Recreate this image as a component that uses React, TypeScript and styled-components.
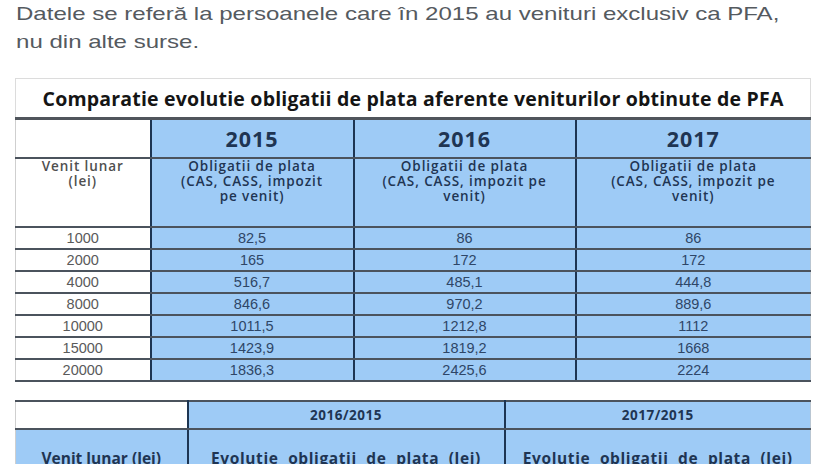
import React from "react";
import styled, { createGlobalStyle } from "styled-components";

const Global = createGlobalStyle`
  html, body { margin: 0; padding: 0; background: #ffffff; overflow: hidden; }
`;

const Page = styled.div`
  width: 825px;
  height: 464px;
  overflow: hidden;
  background: #ffffff;
`;

const Intro = styled.p`
  margin: 0 0 22px 16px;
  font-family: "Liberation Sans", Arial, sans-serif;
  font-size: 18.5px;
  line-height: 28px;
  color: #555a5f;
  white-space: nowrap;
  transform: scaleX(1.3);
  transform-origin: left top;
`;

const Table = styled.table`
  width: 795px;
  margin-left: 15px;
  border-collapse: collapse;
  table-layout: fixed;
  font-family: "Open Sans", "Noto Sans", sans-serif;
`;

const Title = styled.td`
  height: 38px;
  padding: 0;
  text-align: center;
  font-size: 19.5px;
  letter-spacing: 0.2px;
  font-weight: 700;
  color: #151515;
  background: #ffffff;
  border-top: 1px solid #dcdcdc;
  border-left: 1px solid #dcdcdc;
  border-right: 1px solid #dcdcdc;
  border-bottom: 3px solid #50555c;
`;

const Cell = styled.td<{ $blue?: boolean; $h: number; $size?: number; $bold?: boolean; $top?: boolean; $last?: boolean }>`
  height: ${(p) => p.$h}px;
  padding: 0;
  text-align: center;
  vertical-align: ${(p) => (p.$top ? "top" : "middle")};
  background: ${(p) => (p.$blue ? "#9ecbf6" : "#ffffff")};
  color: ${(p) => (p.$blue ? "#1f3553" : "#4f4f4f")};
  font-size: ${(p) => p.$size ?? 13}px;
  font-weight: ${(p) => (p.$bold ? 700 : 600)};
  letter-spacing: ${(p) => (p.$bold ? 1 : 0.9)}px;
  line-height: ${(p) => (p.$bold ? "normal" : "15px")};
  border-top: 2px solid #4b535d;
  border-bottom: 2px solid #4b535d;
  border-left: 2px solid #1d3552;
  border-right: ${(p) => (p.$last ? "1px solid #b9c6d2" : "2px solid #1d3552")};
  &:first-child {
    border-left: 1px solid #cfcfcf;
  }
`;

const NumCell = styled.td<{ $blue?: boolean; $last?: boolean }>`
  height: 20px;
  padding: 0;
  text-align: center;
  font-family: "Liberation Sans", Arial, sans-serif;
  font-size: 14.5px;
  line-height: 20px;
  background: ${(p) => (p.$blue ? "#9ecbf6" : "#ffffff")};
  color: ${(p) => (p.$blue ? "#2e4667" : "#5a5a5a")};
  border-top: 2px solid #4b535d;
  border-bottom: 2px solid #4b535d;
  border-left: 2px solid #1d3552;
  border-right: ${(p) => (p.$last ? "1px solid #b9c6d2" : "2px solid #1d3552")};
  &:first-child {
    border-left: 1px solid #cfcfcf;
  }
`;

const Spacer = styled.div`
  height: 18px;
  width: 795px;
  margin-left: 15px;
  background: #ffffff;
`;

const LowCell = styled.td<{ $blue?: boolean; $last?: boolean }>`
  height: 26px;
  padding: 0;
  text-align: center;
  font-size: 13.5px;
  letter-spacing: 0.5px;
  font-weight: 700;
  background: ${(p) => (p.$blue ? "#9ecbf6" : "#ffffff")};
  color: #1f3553;
  border-top: 2px solid #4b535d;
  border-bottom: 2px solid #4b535d;
  border-left: 2px solid #1d3552;
  border-right: ${(p) => (p.$last ? "1px solid #b9c6d2" : "2px solid #1d3552")};
  &:first-child {
    border-left: 1px solid #cfcfcf;
  }
`;

const TallCell = styled.td<{ $wide?: boolean; $last?: boolean }>`
  height: 70px;
  padding: 18px 0 0;
  vertical-align: top;
  text-align: center;
  font-size: 15.5px;
  font-weight: 700;
  line-height: 20px;
  letter-spacing: ${(p) => (p.$wide ? 0.6 : 0)}px;
  word-spacing: ${(p) => (p.$wide ? 5 : 0)}px;
  white-space: nowrap;
  background: #9ecbf6;
  color: #1f3553;
  border-left: 2px solid #1d3552;
  border-right: ${(p) => (p.$last ? "1px solid #b9c6d2" : "2px solid #1d3552")};
  &:first-child {
    border-left: 1px solid #cfcfcf;
  }
`;

const rows: [string, string, string, string][] = [
  ["1000", "82,5", "86", "86"],
  ["2000", "165", "172", "172"],
  ["4000", "516,7", "485,1", "444,8"],
  ["8000", "846,6", "970,2", "889,6"],
  ["10000", "1011,5", "1212,8", "1112"],
  ["15000", "1423,9", "1819,2", "1668"],
  ["20000", "1836,3", "2425,6", "2224"],
];

export default function App() {
  return (
    <Page>
      <Global />
      <Intro>
        Datele se referă la persoanele care în 2015 au venituri exclusiv ca PFA,
        <br />
        nu din alte surse.
      </Intro>
      <Table>
        <colgroup>
          <col style={{ width: 135 }} />
          <col style={{ width: 203 }} />
          <col style={{ width: 222 }} />
          <col style={{ width: 235 }} />
        </colgroup>
        <tbody>
          <tr>
            <Title colSpan={4}>
              Comparatie evolutie obligatii de plata aferente veniturilor obtinute de PFA
            </Title>
          </tr>
          <tr>
            <Cell $h={37} />
            <Cell $h={37} $blue $bold $size={21.5}>2015</Cell>
            <Cell $h={37} $blue $bold $size={21.5}>2016</Cell>
            <Cell $h={37} $blue $bold $size={21.5} $last>2017</Cell>
          </tr>
          <tr>
            <Cell $h={67} $top $size={13.5}>
              Venit lunar
              <br />
              (lei)
            </Cell>
            <Cell $h={67} $top $blue $size={13.5}>
              Obligatii de plata
              <br />
              (CAS, CASS, impozit
              <br />
              pe venit)
            </Cell>
            <Cell $h={67} $top $blue $size={13.5}>
              Obligatii de plata
              <br />
              (CAS, CASS, impozit pe
              <br />
              venit)
            </Cell>
            <Cell $h={67} $top $blue $size={13.5} $last>
              Obligatii de plata
              <br />
              (CAS, CASS, impozit pe
              <br />
              venit)
            </Cell>
          </tr>
          {rows.map((r) => (
            <tr key={r[0]}>
              <NumCell>{r[0]}</NumCell>
              <NumCell $blue>{r[1]}</NumCell>
              <NumCell $blue>{r[2]}</NumCell>
              <NumCell $blue $last>{r[3]}</NumCell>
            </tr>
          ))}
        </tbody>
      </Table>
      <Spacer />
      <Table>
        <colgroup>
          <col style={{ width: 172 }} />
          <col style={{ width: 317 }} />
          <col style={{ width: 306 }} />
        </colgroup>
        <tbody>
          <tr>
            <LowCell />
            <LowCell $blue>2016/2015</LowCell>
            <LowCell $blue $last>2017/2015</LowCell>
          </tr>
          <tr>
            <TallCell>Venit lunar (lei)</TallCell>
            <TallCell $wide>Evolutie obligatii de plata (lei)</TallCell>
            <TallCell $wide $last>Evolutie obligatii de plata (lei)</TallCell>
          </tr>
        </tbody>
      </Table>
    </Page>
  );
}
